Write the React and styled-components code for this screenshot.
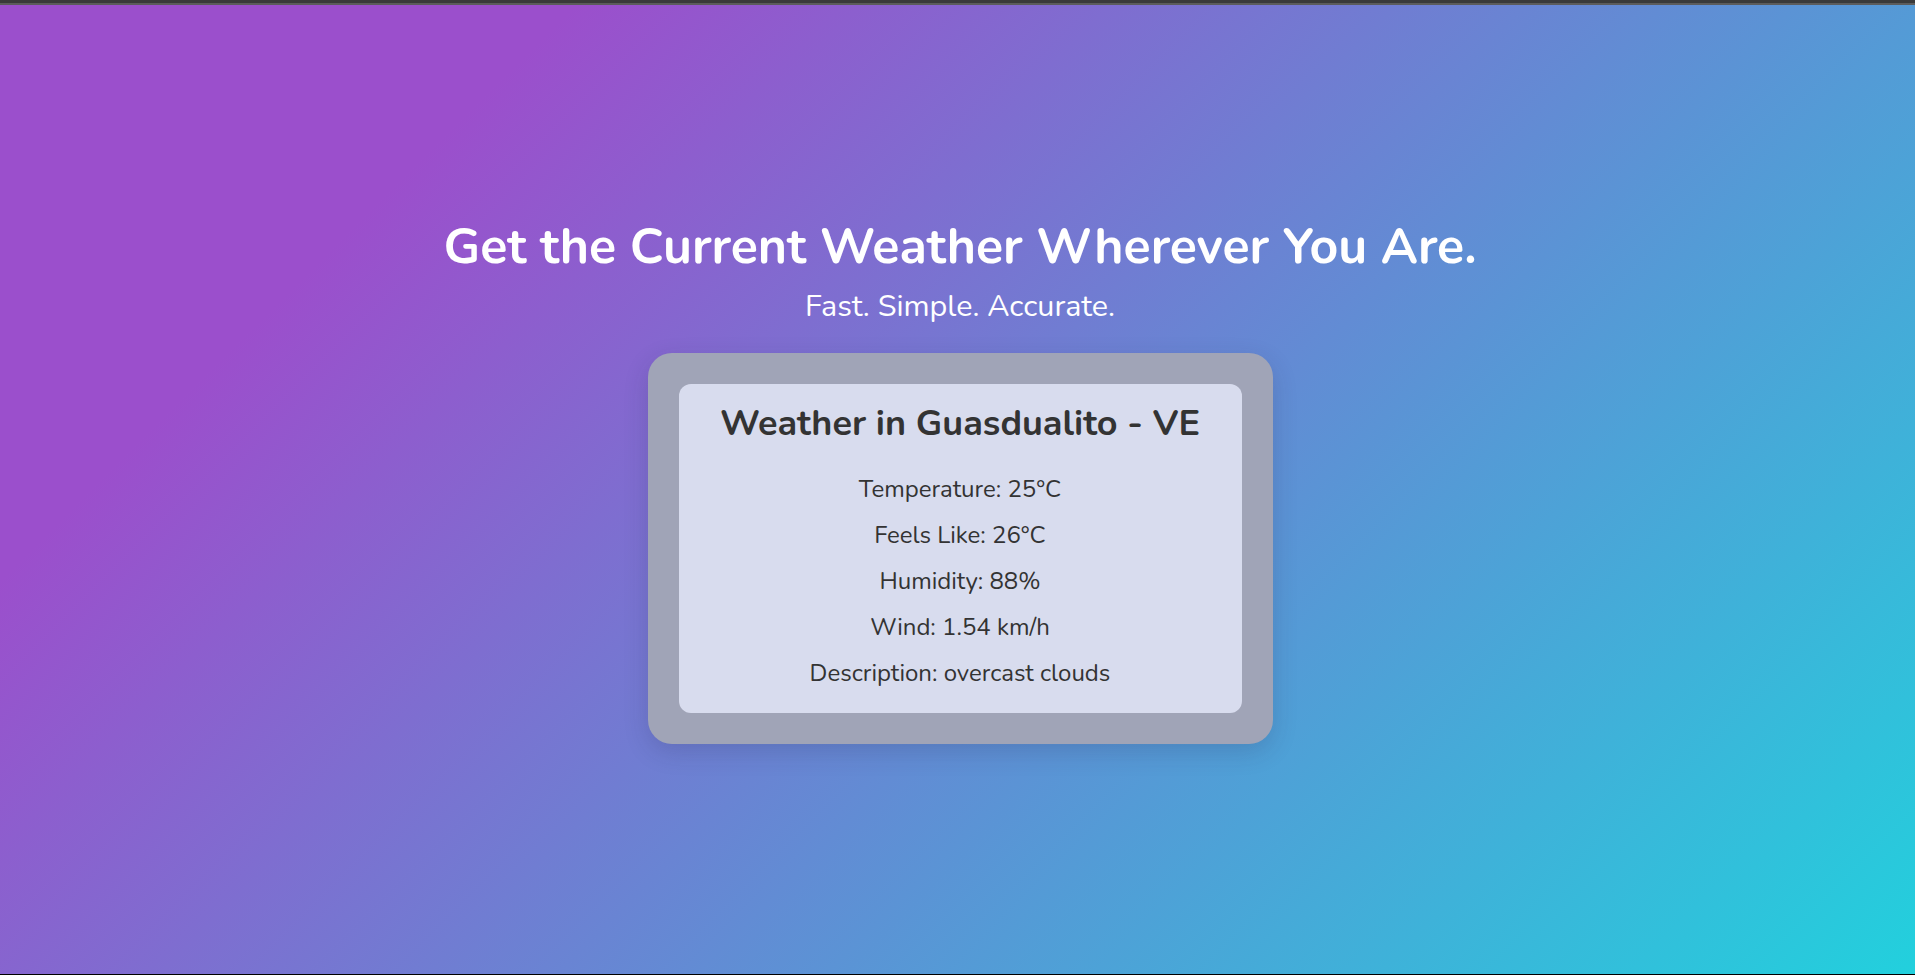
import React from 'react';
import styled, { createGlobalStyle } from 'styled-components';

const GlobalStyle = createGlobalStyle`
  * { box-sizing: border-box; }
  html, body { margin: 0; padding: 0; }
  body {
    font-family: "Nunito", "Noto Sans", "Liberation Sans", sans-serif;
  }
`;

const Page = styled.main`
  min-height: 100vh;
  display: flex;
  flex-direction: column;
  align-items: center;
  justify-content: center;
  padding: 0 0 16px 5px;
  background: linear-gradient(135deg, #9b4fcc 20%, #22d0dd 100%);
  border-top: 3px solid #3a3a3a;
  border-bottom: 1px solid #000;
  box-shadow: inset 0 2px 0 #5c5c5c;
`;

const Title = styled.h1`
  margin: 0;
  font-size: 50px;
  line-height: 1.2;
  font-weight: 700;
  color: #fff;
`;

const Tagline = styled.p`
  margin: 11px 0 0;
  font-size: 30.5px;
  line-height: 1.2;
  color: #fff;
`;

const Frame = styled.section`
  width: 625px;
  margin-top: 28.5px;
  padding: 31px;
  border-radius: 24px;
  background: #a0a4b7;
  box-shadow: 0 8px 24px rgba(40, 40, 80, 0.18);
`;

const Card = styled.div`
  display: flex;
  flex-direction: column;
  align-items: center;
  padding: 17.5px 20px 17px;
  border-radius: 12px;
  background: #d8dcee;
  color: #333;
`;

const CardTitle = styled.h2`
  margin: 0 0 20.5px;
  font-size: 36px;
  line-height: 1.2;
  font-weight: 700;
`;

const Stat = styled.p`
  margin: 0;
  font-size: 24px;
  line-height: 46px;
`;

const weather = {
  city: 'Guasdualito',
  country: 'VE',
  temp: 25,
  feelsLike: 26,
  humidity: 88,
  wind: 1.54,
  description: 'overcast clouds',
};

export default function App() {
  return (
    <Page>
      <GlobalStyle />
      <Title>Get the Current Weather Wherever You Are.</Title>
      <Tagline>Fast. Simple. Accurate.</Tagline>
      <Frame>
        <Card>
          <CardTitle>Weather in {weather.city} - {weather.country}</CardTitle>
          <Stat>Temperature: {weather.temp}°C</Stat>
          <Stat>Feels Like: {weather.feelsLike}°C</Stat>
          <Stat>Humidity: {weather.humidity}%</Stat>
          <Stat>Wind: {weather.wind} km/h</Stat>
          <Stat>Description: {weather.description}</Stat>
        </Card>
      </Frame>
    </Page>
  );
}
